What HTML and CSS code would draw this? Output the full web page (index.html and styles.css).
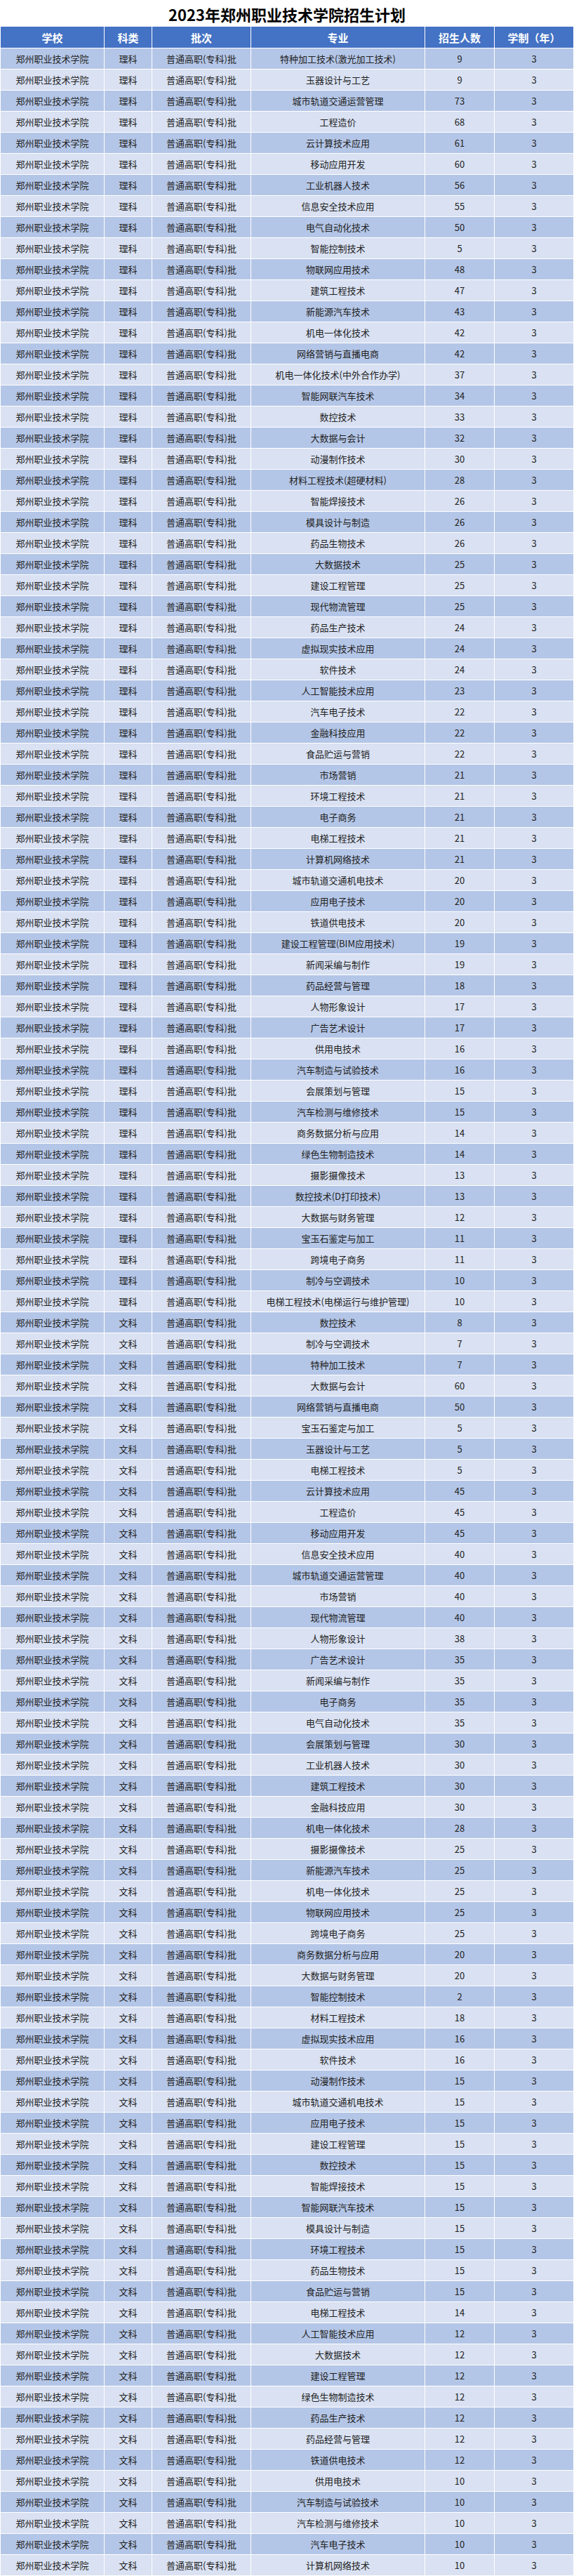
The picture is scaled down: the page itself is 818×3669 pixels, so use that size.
FILE: index.html
```html
<!DOCTYPE html>
<html lang="zh-CN">
<head>
<meta charset="utf-8">
<title>2023年郑州职业技术学院招生计划</title>
<link rel="stylesheet" href="styles.css">
</head>
<body>
<h1 class="title">2023年郑州职业技术学院招生计划</h1>
<table class="plan">
<colgroup><col class="c1"><col class="c2"><col class="c3"><col class="c4"><col class="c5"><col class="c6"></colgroup>
<thead>
<tr><th>学校</th><th>科类</th><th>批次</th><th>专业</th><th>招生人数</th><th>学制（年）</th></tr>
</thead>
<tbody>
<tr><td>郑州职业技术学院</td><td>理科</td><td>普通高职(专科)批</td><td>特种加工技术(激光加工技术)</td><td>9</td><td>3</td></tr>
<tr><td>郑州职业技术学院</td><td>理科</td><td>普通高职(专科)批</td><td>玉器设计与工艺</td><td>9</td><td>3</td></tr>
<tr><td>郑州职业技术学院</td><td>理科</td><td>普通高职(专科)批</td><td>城市轨道交通运营管理</td><td>73</td><td>3</td></tr>
<tr><td>郑州职业技术学院</td><td>理科</td><td>普通高职(专科)批</td><td>工程造价</td><td>68</td><td>3</td></tr>
<tr><td>郑州职业技术学院</td><td>理科</td><td>普通高职(专科)批</td><td>云计算技术应用</td><td>61</td><td>3</td></tr>
<tr><td>郑州职业技术学院</td><td>理科</td><td>普通高职(专科)批</td><td>移动应用开发</td><td>60</td><td>3</td></tr>
<tr><td>郑州职业技术学院</td><td>理科</td><td>普通高职(专科)批</td><td>工业机器人技术</td><td>56</td><td>3</td></tr>
<tr><td>郑州职业技术学院</td><td>理科</td><td>普通高职(专科)批</td><td>信息安全技术应用</td><td>55</td><td>3</td></tr>
<tr><td>郑州职业技术学院</td><td>理科</td><td>普通高职(专科)批</td><td>电气自动化技术</td><td>50</td><td>3</td></tr>
<tr><td>郑州职业技术学院</td><td>理科</td><td>普通高职(专科)批</td><td>智能控制技术</td><td>5</td><td>3</td></tr>
<tr><td>郑州职业技术学院</td><td>理科</td><td>普通高职(专科)批</td><td>物联网应用技术</td><td>48</td><td>3</td></tr>
<tr><td>郑州职业技术学院</td><td>理科</td><td>普通高职(专科)批</td><td>建筑工程技术</td><td>47</td><td>3</td></tr>
<tr><td>郑州职业技术学院</td><td>理科</td><td>普通高职(专科)批</td><td>新能源汽车技术</td><td>43</td><td>3</td></tr>
<tr><td>郑州职业技术学院</td><td>理科</td><td>普通高职(专科)批</td><td>机电一体化技术</td><td>42</td><td>3</td></tr>
<tr><td>郑州职业技术学院</td><td>理科</td><td>普通高职(专科)批</td><td>网络营销与直播电商</td><td>42</td><td>3</td></tr>
<tr><td>郑州职业技术学院</td><td>理科</td><td>普通高职(专科)批</td><td>机电一体化技术(中外合作办学)</td><td>37</td><td>3</td></tr>
<tr><td>郑州职业技术学院</td><td>理科</td><td>普通高职(专科)批</td><td>智能网联汽车技术</td><td>34</td><td>3</td></tr>
<tr><td>郑州职业技术学院</td><td>理科</td><td>普通高职(专科)批</td><td>数控技术</td><td>33</td><td>3</td></tr>
<tr><td>郑州职业技术学院</td><td>理科</td><td>普通高职(专科)批</td><td>大数据与会计</td><td>32</td><td>3</td></tr>
<tr><td>郑州职业技术学院</td><td>理科</td><td>普通高职(专科)批</td><td>动漫制作技术</td><td>30</td><td>3</td></tr>
<tr><td>郑州职业技术学院</td><td>理科</td><td>普通高职(专科)批</td><td>材料工程技术(超硬材料)</td><td>28</td><td>3</td></tr>
<tr><td>郑州职业技术学院</td><td>理科</td><td>普通高职(专科)批</td><td>智能焊接技术</td><td>26</td><td>3</td></tr>
<tr><td>郑州职业技术学院</td><td>理科</td><td>普通高职(专科)批</td><td>模具设计与制造</td><td>26</td><td>3</td></tr>
<tr><td>郑州职业技术学院</td><td>理科</td><td>普通高职(专科)批</td><td>药品生物技术</td><td>26</td><td>3</td></tr>
<tr><td>郑州职业技术学院</td><td>理科</td><td>普通高职(专科)批</td><td>大数据技术</td><td>25</td><td>3</td></tr>
<tr><td>郑州职业技术学院</td><td>理科</td><td>普通高职(专科)批</td><td>建设工程管理</td><td>25</td><td>3</td></tr>
<tr><td>郑州职业技术学院</td><td>理科</td><td>普通高职(专科)批</td><td>现代物流管理</td><td>25</td><td>3</td></tr>
<tr><td>郑州职业技术学院</td><td>理科</td><td>普通高职(专科)批</td><td>药品生产技术</td><td>24</td><td>3</td></tr>
<tr><td>郑州职业技术学院</td><td>理科</td><td>普通高职(专科)批</td><td>虚拟现实技术应用</td><td>24</td><td>3</td></tr>
<tr><td>郑州职业技术学院</td><td>理科</td><td>普通高职(专科)批</td><td>软件技术</td><td>24</td><td>3</td></tr>
<tr><td>郑州职业技术学院</td><td>理科</td><td>普通高职(专科)批</td><td>人工智能技术应用</td><td>23</td><td>3</td></tr>
<tr><td>郑州职业技术学院</td><td>理科</td><td>普通高职(专科)批</td><td>汽车电子技术</td><td>22</td><td>3</td></tr>
<tr><td>郑州职业技术学院</td><td>理科</td><td>普通高职(专科)批</td><td>金融科技应用</td><td>22</td><td>3</td></tr>
<tr><td>郑州职业技术学院</td><td>理科</td><td>普通高职(专科)批</td><td>食品贮运与营销</td><td>22</td><td>3</td></tr>
<tr><td>郑州职业技术学院</td><td>理科</td><td>普通高职(专科)批</td><td>市场营销</td><td>21</td><td>3</td></tr>
<tr><td>郑州职业技术学院</td><td>理科</td><td>普通高职(专科)批</td><td>环境工程技术</td><td>21</td><td>3</td></tr>
<tr><td>郑州职业技术学院</td><td>理科</td><td>普通高职(专科)批</td><td>电子商务</td><td>21</td><td>3</td></tr>
<tr><td>郑州职业技术学院</td><td>理科</td><td>普通高职(专科)批</td><td>电梯工程技术</td><td>21</td><td>3</td></tr>
<tr><td>郑州职业技术学院</td><td>理科</td><td>普通高职(专科)批</td><td>计算机网络技术</td><td>21</td><td>3</td></tr>
<tr><td>郑州职业技术学院</td><td>理科</td><td>普通高职(专科)批</td><td>城市轨道交通机电技术</td><td>20</td><td>3</td></tr>
<tr><td>郑州职业技术学院</td><td>理科</td><td>普通高职(专科)批</td><td>应用电子技术</td><td>20</td><td>3</td></tr>
<tr><td>郑州职业技术学院</td><td>理科</td><td>普通高职(专科)批</td><td>铁道供电技术</td><td>20</td><td>3</td></tr>
<tr><td>郑州职业技术学院</td><td>理科</td><td>普通高职(专科)批</td><td>建设工程管理(BIM应用技术)</td><td>19</td><td>3</td></tr>
<tr><td>郑州职业技术学院</td><td>理科</td><td>普通高职(专科)批</td><td>新闻采编与制作</td><td>19</td><td>3</td></tr>
<tr><td>郑州职业技术学院</td><td>理科</td><td>普通高职(专科)批</td><td>药品经营与管理</td><td>18</td><td>3</td></tr>
<tr><td>郑州职业技术学院</td><td>理科</td><td>普通高职(专科)批</td><td>人物形象设计</td><td>17</td><td>3</td></tr>
<tr><td>郑州职业技术学院</td><td>理科</td><td>普通高职(专科)批</td><td>广告艺术设计</td><td>17</td><td>3</td></tr>
<tr><td>郑州职业技术学院</td><td>理科</td><td>普通高职(专科)批</td><td>供用电技术</td><td>16</td><td>3</td></tr>
<tr><td>郑州职业技术学院</td><td>理科</td><td>普通高职(专科)批</td><td>汽车制造与试验技术</td><td>16</td><td>3</td></tr>
<tr><td>郑州职业技术学院</td><td>理科</td><td>普通高职(专科)批</td><td>会展策划与管理</td><td>15</td><td>3</td></tr>
<tr><td>郑州职业技术学院</td><td>理科</td><td>普通高职(专科)批</td><td>汽车检测与维修技术</td><td>15</td><td>3</td></tr>
<tr><td>郑州职业技术学院</td><td>理科</td><td>普通高职(专科)批</td><td>商务数据分析与应用</td><td>14</td><td>3</td></tr>
<tr><td>郑州职业技术学院</td><td>理科</td><td>普通高职(专科)批</td><td>绿色生物制造技术</td><td>14</td><td>3</td></tr>
<tr><td>郑州职业技术学院</td><td>理科</td><td>普通高职(专科)批</td><td>摄影摄像技术</td><td>13</td><td>3</td></tr>
<tr><td>郑州职业技术学院</td><td>理科</td><td>普通高职(专科)批</td><td>数控技术(D打印技术)</td><td>13</td><td>3</td></tr>
<tr><td>郑州职业技术学院</td><td>理科</td><td>普通高职(专科)批</td><td>大数据与财务管理</td><td>12</td><td>3</td></tr>
<tr><td>郑州职业技术学院</td><td>理科</td><td>普通高职(专科)批</td><td>宝玉石鉴定与加工</td><td>11</td><td>3</td></tr>
<tr><td>郑州职业技术学院</td><td>理科</td><td>普通高职(专科)批</td><td>跨境电子商务</td><td>11</td><td>3</td></tr>
<tr><td>郑州职业技术学院</td><td>理科</td><td>普通高职(专科)批</td><td>制冷与空调技术</td><td>10</td><td>3</td></tr>
<tr><td>郑州职业技术学院</td><td>理科</td><td>普通高职(专科)批</td><td>电梯工程技术(电梯运行与维护管理)</td><td>10</td><td>3</td></tr>
<tr><td>郑州职业技术学院</td><td>文科</td><td>普通高职(专科)批</td><td>数控技术</td><td>8</td><td>3</td></tr>
<tr><td>郑州职业技术学院</td><td>文科</td><td>普通高职(专科)批</td><td>制冷与空调技术</td><td>7</td><td>3</td></tr>
<tr><td>郑州职业技术学院</td><td>文科</td><td>普通高职(专科)批</td><td>特种加工技术</td><td>7</td><td>3</td></tr>
<tr><td>郑州职业技术学院</td><td>文科</td><td>普通高职(专科)批</td><td>大数据与会计</td><td>60</td><td>3</td></tr>
<tr><td>郑州职业技术学院</td><td>文科</td><td>普通高职(专科)批</td><td>网络营销与直播电商</td><td>50</td><td>3</td></tr>
<tr><td>郑州职业技术学院</td><td>文科</td><td>普通高职(专科)批</td><td>宝玉石鉴定与加工</td><td>5</td><td>3</td></tr>
<tr><td>郑州职业技术学院</td><td>文科</td><td>普通高职(专科)批</td><td>玉器设计与工艺</td><td>5</td><td>3</td></tr>
<tr><td>郑州职业技术学院</td><td>文科</td><td>普通高职(专科)批</td><td>电梯工程技术</td><td>5</td><td>3</td></tr>
<tr><td>郑州职业技术学院</td><td>文科</td><td>普通高职(专科)批</td><td>云计算技术应用</td><td>45</td><td>3</td></tr>
<tr><td>郑州职业技术学院</td><td>文科</td><td>普通高职(专科)批</td><td>工程造价</td><td>45</td><td>3</td></tr>
<tr><td>郑州职业技术学院</td><td>文科</td><td>普通高职(专科)批</td><td>移动应用开发</td><td>45</td><td>3</td></tr>
<tr><td>郑州职业技术学院</td><td>文科</td><td>普通高职(专科)批</td><td>信息安全技术应用</td><td>40</td><td>3</td></tr>
<tr><td>郑州职业技术学院</td><td>文科</td><td>普通高职(专科)批</td><td>城市轨道交通运营管理</td><td>40</td><td>3</td></tr>
<tr><td>郑州职业技术学院</td><td>文科</td><td>普通高职(专科)批</td><td>市场营销</td><td>40</td><td>3</td></tr>
<tr><td>郑州职业技术学院</td><td>文科</td><td>普通高职(专科)批</td><td>现代物流管理</td><td>40</td><td>3</td></tr>
<tr><td>郑州职业技术学院</td><td>文科</td><td>普通高职(专科)批</td><td>人物形象设计</td><td>38</td><td>3</td></tr>
<tr><td>郑州职业技术学院</td><td>文科</td><td>普通高职(专科)批</td><td>广告艺术设计</td><td>35</td><td>3</td></tr>
<tr><td>郑州职业技术学院</td><td>文科</td><td>普通高职(专科)批</td><td>新闻采编与制作</td><td>35</td><td>3</td></tr>
<tr><td>郑州职业技术学院</td><td>文科</td><td>普通高职(专科)批</td><td>电子商务</td><td>35</td><td>3</td></tr>
<tr><td>郑州职业技术学院</td><td>文科</td><td>普通高职(专科)批</td><td>电气自动化技术</td><td>35</td><td>3</td></tr>
<tr><td>郑州职业技术学院</td><td>文科</td><td>普通高职(专科)批</td><td>会展策划与管理</td><td>30</td><td>3</td></tr>
<tr><td>郑州职业技术学院</td><td>文科</td><td>普通高职(专科)批</td><td>工业机器人技术</td><td>30</td><td>3</td></tr>
<tr><td>郑州职业技术学院</td><td>文科</td><td>普通高职(专科)批</td><td>建筑工程技术</td><td>30</td><td>3</td></tr>
<tr><td>郑州职业技术学院</td><td>文科</td><td>普通高职(专科)批</td><td>金融科技应用</td><td>30</td><td>3</td></tr>
<tr><td>郑州职业技术学院</td><td>文科</td><td>普通高职(专科)批</td><td>机电一体化技术</td><td>28</td><td>3</td></tr>
<tr><td>郑州职业技术学院</td><td>文科</td><td>普通高职(专科)批</td><td>摄影摄像技术</td><td>25</td><td>3</td></tr>
<tr><td>郑州职业技术学院</td><td>文科</td><td>普通高职(专科)批</td><td>新能源汽车技术</td><td>25</td><td>3</td></tr>
<tr><td>郑州职业技术学院</td><td>文科</td><td>普通高职(专科)批</td><td>机电一体化技术</td><td>25</td><td>3</td></tr>
<tr><td>郑州职业技术学院</td><td>文科</td><td>普通高职(专科)批</td><td>物联网应用技术</td><td>25</td><td>3</td></tr>
<tr><td>郑州职业技术学院</td><td>文科</td><td>普通高职(专科)批</td><td>跨境电子商务</td><td>25</td><td>3</td></tr>
<tr><td>郑州职业技术学院</td><td>文科</td><td>普通高职(专科)批</td><td>商务数据分析与应用</td><td>20</td><td>3</td></tr>
<tr><td>郑州职业技术学院</td><td>文科</td><td>普通高职(专科)批</td><td>大数据与财务管理</td><td>20</td><td>3</td></tr>
<tr><td>郑州职业技术学院</td><td>文科</td><td>普通高职(专科)批</td><td>智能控制技术</td><td>2</td><td>3</td></tr>
<tr><td>郑州职业技术学院</td><td>文科</td><td>普通高职(专科)批</td><td>材料工程技术</td><td>18</td><td>3</td></tr>
<tr><td>郑州职业技术学院</td><td>文科</td><td>普通高职(专科)批</td><td>虚拟现实技术应用</td><td>16</td><td>3</td></tr>
<tr><td>郑州职业技术学院</td><td>文科</td><td>普通高职(专科)批</td><td>软件技术</td><td>16</td><td>3</td></tr>
<tr><td>郑州职业技术学院</td><td>文科</td><td>普通高职(专科)批</td><td>动漫制作技术</td><td>15</td><td>3</td></tr>
<tr><td>郑州职业技术学院</td><td>文科</td><td>普通高职(专科)批</td><td>城市轨道交通机电技术</td><td>15</td><td>3</td></tr>
<tr><td>郑州职业技术学院</td><td>文科</td><td>普通高职(专科)批</td><td>应用电子技术</td><td>15</td><td>3</td></tr>
<tr><td>郑州职业技术学院</td><td>文科</td><td>普通高职(专科)批</td><td>建设工程管理</td><td>15</td><td>3</td></tr>
<tr><td>郑州职业技术学院</td><td>文科</td><td>普通高职(专科)批</td><td>数控技术</td><td>15</td><td>3</td></tr>
<tr><td>郑州职业技术学院</td><td>文科</td><td>普通高职(专科)批</td><td>智能焊接技术</td><td>15</td><td>3</td></tr>
<tr><td>郑州职业技术学院</td><td>文科</td><td>普通高职(专科)批</td><td>智能网联汽车技术</td><td>15</td><td>3</td></tr>
<tr><td>郑州职业技术学院</td><td>文科</td><td>普通高职(专科)批</td><td>模具设计与制造</td><td>15</td><td>3</td></tr>
<tr><td>郑州职业技术学院</td><td>文科</td><td>普通高职(专科)批</td><td>环境工程技术</td><td>15</td><td>3</td></tr>
<tr><td>郑州职业技术学院</td><td>文科</td><td>普通高职(专科)批</td><td>药品生物技术</td><td>15</td><td>3</td></tr>
<tr><td>郑州职业技术学院</td><td>文科</td><td>普通高职(专科)批</td><td>食品贮运与营销</td><td>15</td><td>3</td></tr>
<tr><td>郑州职业技术学院</td><td>文科</td><td>普通高职(专科)批</td><td>电梯工程技术</td><td>14</td><td>3</td></tr>
<tr><td>郑州职业技术学院</td><td>文科</td><td>普通高职(专科)批</td><td>人工智能技术应用</td><td>12</td><td>3</td></tr>
<tr><td>郑州职业技术学院</td><td>文科</td><td>普通高职(专科)批</td><td>大数据技术</td><td>12</td><td>3</td></tr>
<tr><td>郑州职业技术学院</td><td>文科</td><td>普通高职(专科)批</td><td>建设工程管理</td><td>12</td><td>3</td></tr>
<tr><td>郑州职业技术学院</td><td>文科</td><td>普通高职(专科)批</td><td>绿色生物制造技术</td><td>12</td><td>3</td></tr>
<tr><td>郑州职业技术学院</td><td>文科</td><td>普通高职(专科)批</td><td>药品生产技术</td><td>12</td><td>3</td></tr>
<tr><td>郑州职业技术学院</td><td>文科</td><td>普通高职(专科)批</td><td>药品经营与管理</td><td>12</td><td>3</td></tr>
<tr><td>郑州职业技术学院</td><td>文科</td><td>普通高职(专科)批</td><td>铁道供电技术</td><td>12</td><td>3</td></tr>
<tr><td>郑州职业技术学院</td><td>文科</td><td>普通高职(专科)批</td><td>供用电技术</td><td>10</td><td>3</td></tr>
<tr><td>郑州职业技术学院</td><td>文科</td><td>普通高职(专科)批</td><td>汽车制造与试验技术</td><td>10</td><td>3</td></tr>
<tr><td>郑州职业技术学院</td><td>文科</td><td>普通高职(专科)批</td><td>汽车检测与维修技术</td><td>10</td><td>3</td></tr>
<tr><td>郑州职业技术学院</td><td>文科</td><td>普通高职(专科)批</td><td>汽车电子技术</td><td>10</td><td>3</td></tr>
<tr><td>郑州职业技术学院</td><td>文科</td><td>普通高职(专科)批</td><td>计算机网络技术</td><td>10</td><td>3</td></tr>
</tbody>
</table>
</body>
</html>
```

FILE: styles.css
```css
html, body {
  margin: 0;
  padding: 0;
  background: #ffffff;
}

body {
  width: 818px;
  font-family: "Noto Sans CJK SC", "Microsoft YaHei", "Liberation Sans", sans-serif;
  color: #222222;
}

.title {
  margin: 0;
  height: 37px;
  font-size: 22px;
  font-weight: 700;
  line-height: 40px;
  text-align: center;
  color: #000000;
  white-space: nowrap;
}

.plan {
  width: 818px;
  table-layout: fixed;
  border-collapse: separate;
  border-spacing: 1px;
  background: #ffffff;
}

.c1 { width: 147px; }
.c2 { width: 67px; }
.c3 { width: 140px; }
.c4 { width: 247px; }
.c5 { width: 98px; }
.c6 { width: 112px; }

.plan th,
.plan td {
  padding: 0;
  text-align: center;
  vertical-align: middle;
  white-space: nowrap;
  overflow: hidden;
}

.plan th {
  height: 30px;
  background: #4472c4;
  color: #ffffff;
  font-size: 15px;
  font-weight: 700;
}

.plan td {
  height: 29px;
  font-size: 13px;
  line-height: 16px;
}

.plan tbody tr:nth-child(odd) td {
  background: #b4c6e7;
}

.plan tbody tr:nth-child(even) td {
  background: #d9e1f2;
}
```
